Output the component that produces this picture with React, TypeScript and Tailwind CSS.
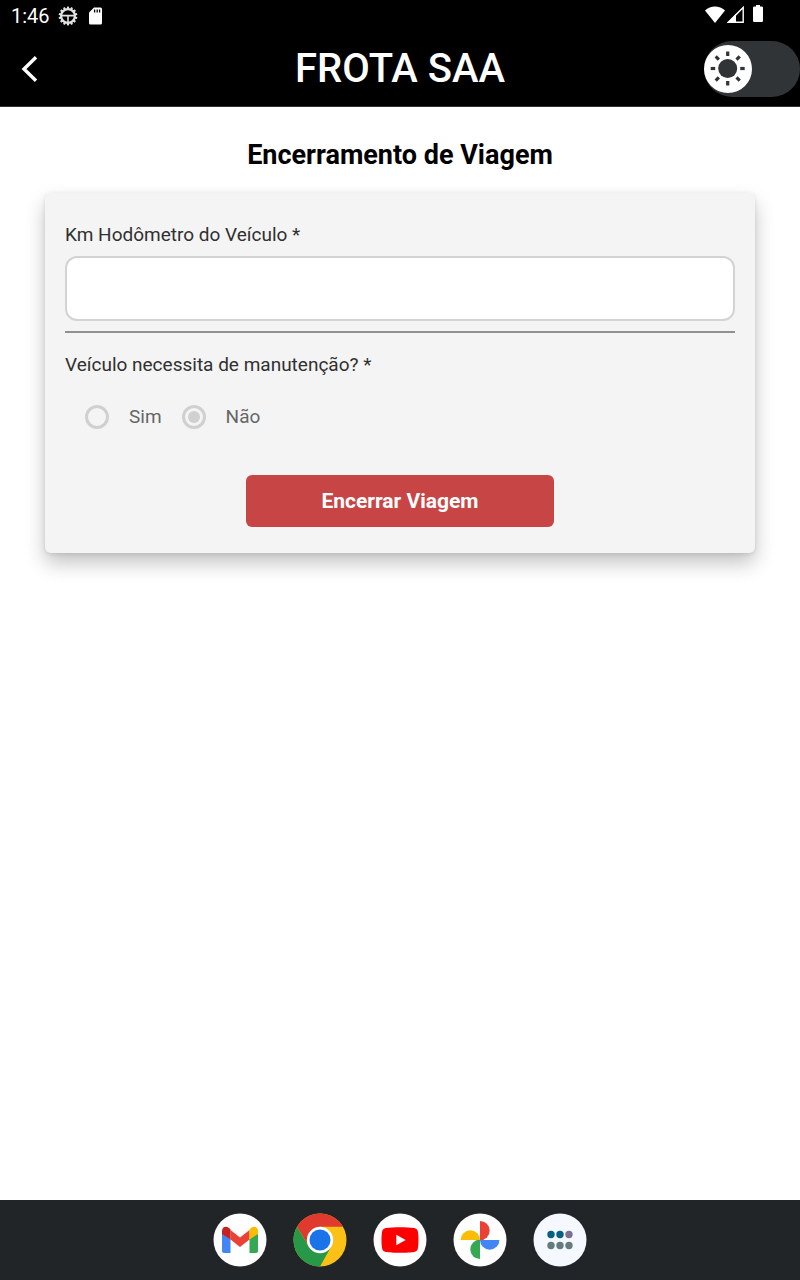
import { useState } from "react";

const teeth = Array.from({ length: 14 }, (_, i) => (i * 360) / 14);
const rays = [0, 45, 90, 135, 180, 225, 270, 315];

function StatusBar() {
  return (
    <div className="flex h-8 items-center justify-between pl-[11px] pr-9 text-white">
      <div className="flex items-center gap-2">
        <span className="text-[20px] leading-8">1:46</span>
        <svg width="20" height="20" viewBox="0 0 20 20" fill="none" stroke="#e2e2e2">
          <circle cx="10" cy="10" r="6.9" strokeWidth="2.2" />
          {teeth.map((angle) => (
            <path key={angle} d="M10 3V.6" strokeWidth="2.1" transform={`rotate(${angle} 10 10)`} />
          ))}
          <path d="M3.5 9.6h13M10 10v6.5" strokeWidth="1.6" />
        </svg>
        <svg className="ml-0.5" width="15" height="18" viewBox="0 0 15 18">
          <path d="M6 .5h6.500Q14 .5 14 2v14q0 1.500-1.500 1.500h-10Q1 17.500 1 16V5.500Z" fill="#fff" />
          <path d="M6.600 2.500v3M9.200 2.500v3M11.600 2.500v3" stroke="#000" strokeWidth="1.300" />
        </svg>
      </div>
      <div className="flex items-center gap-0.5 pb-1">
        <svg width="20" height="17" viewBox="0 0 20 17" fill="#fff">
          <path d="M0 4.500C5.500-.8 14.500-.8 20 4.500L10 17Z" />
        </svg>
        <svg width="17" height="17" viewBox="0 0 17 17">
          <path d="M16.200 1.400v14.800H1.400Z" fill="none" stroke="#fff" strokeWidth="1.400" />
          <path d="M9 8v9H.5Z" fill="#fff" />
        </svg>
        <svg className="ml-1.5" width="12" height="18" viewBox="0 0 12 18" fill="#fff">
          <path d="M4 0h4v1.500h1.800Q11 1.500 11 2.700v13Q11 17 9.800 17H2.200Q1 17 1 15.700v-13Q1 1.500 2.200 1.500H4Z" />
        </svg>
      </div>
    </div>
  );
}

function ThemeSwitch() {
  const [dark, setDark] = useState(false);

  return (
    <button
      type="button"
      role="switch"
      aria-checked={dark}
      aria-label="Tema escuro"
      onClick={() => setDark(!dark)}
      className={`flex h-14 w-24 items-center rounded-full bg-[#303437] ${dark ? "justify-end" : "justify-start"}`}
    >
      <svg width="48" height="48" viewBox="0 0 48 48">
        <circle cx="24" cy="24" r="24" fill="#fff" />
        <circle cx="23.700" cy="23.500" r="9.500" fill="#303437" />
        {rays.map((angle) => (
          <path
            key={angle}
            d="M23.700 6.500v4.500"
            stroke="#303437"
            strokeWidth="3.200"
            transform={`rotate(${angle} 23.700 23.500)`}
          />
        ))}
      </svg>
    </button>
  );
}

function Header() {
  return (
    <header className="border-b border-[#333] bg-black text-white">
      <StatusBar />
      <div className="grid h-[74px] grid-cols-[1fr_auto_1fr] items-center">
        <a href="#voltar" aria-label="Voltar" className="justify-self-start pl-5">
          <svg width="20" height="28" viewBox="0 0 20 28" fill="none" stroke="#fff" strokeWidth="3.400">
            <path d="M16 2.200 4 14l12 11.800" />
          </svg>
        </a>
        <h1 className="text-[40px] leading-none font-medium">FROTA SAA</h1>
        <div className="flex justify-end">
          <ThemeSwitch />
        </div>
      </div>
    </header>
  );
}

function RadioOption({ label, defaultChecked }: { label: string; defaultChecked?: boolean }) {
  return (
    <label className="flex items-center gap-5 text-[#666]">
      <input
        type="radio"
        name="manutencao"
        defaultChecked={defaultChecked}
        className="size-6 appearance-none rounded-full border-3 border-[#d0d0d0] bg-clip-content p-[3px] checked:bg-[#d0d0d0]"
      />
      {label}
    </label>
  );
}

function TripForm() {
  return (
    <form
      onSubmit={(e) => e.preventDefault()}
      className="mx-[45px] mt-[22px] rounded-md bg-[#f4f4f4] px-5 pt-[30px] pb-[26px] text-[19px] leading-6 text-[#303030] shadow-[0_10px_20px_rgba(0,0,0,0.24),0_1px_4px_rgba(0,0,0,0.1)]"
    >
      <div className="border-b-2 border-[#909090] pb-[10px]">
        <label htmlFor="hodometro" className="block">
          Km Hodômetro do Veículo *
        </label>
        <input
          id="hodometro"
          type="text"
          inputMode="numeric"
          className="mt-[9px] block h-[65px] w-full rounded-xl border-2 border-[#d3d3d3] bg-white px-4 outline-none"
        />
      </div>

      <fieldset className="mt-5">
        <legend>Veículo necessita de manutenção? *</legend>
        <div className="mt-7 flex gap-5 px-5">
          <RadioOption label="Sim" />
          <RadioOption label="Não" defaultChecked />
        </div>
      </fieldset>

      <button
        type="submit"
        className="mx-auto mt-[46px] block h-[52px] w-[46%] rounded-md bg-[#c84545] text-[21px] font-bold text-white"
      >
        Encerrar Viagem
      </button>
    </form>
  );
}

function GmailIcon() {
  return (
    <svg width="54" height="54" viewBox="0 0 54 54">
      <circle cx="27" cy="27" r="26.500" fill="#fff" />
      <path d="M9 20v18q0 2 2 2h6.500V26Z" fill="#4285f4" />
      <path d="M45 20v18q0 2-2 2h-6.500V26Z" fill="#34a853" />
      <path d="m17.500 17 9.500 7.500 9.500-7.500v9.500L27 34l-9.500-7.500Z" fill="#ea4335" />
      <path d="M9 21v-3c0-4 4-5.500 7-3l1.500 1.500v10Z" fill="#c5221f" />
      <path d="M45 21v-3c0-4-4-5.500-7-3l-1.500 1.500v10Z" fill="#fbbc04" />
    </svg>
  );
}

function ChromeIcon() {
  return (
    <svg width="54" height="54" viewBox="0 0 54 54">
      <circle cx="27" cy="27" r="26.500" fill="#fbc116" />
      <path d="M4.050 13.750A26.500 26.500 0 0 1 49.950 13.750H27L15.740 33.500Z" fill="#df3a2d" />
      <path d="M4.050 13.750A26.500 26.500 0 0 0 27 53.500L38.260 33.500H15.740Z" fill="#279847" />
      <circle cx="27" cy="27" r="13.200" fill="#fff" />
      <circle cx="27" cy="27" r="10.500" fill="#1a73e8" />
    </svg>
  );
}

function YoutubeIcon() {
  return (
    <svg width="54" height="54" viewBox="0 0 54 54">
      <circle cx="27" cy="27" r="26.500" fill="#fff" />
      <path
        d="M27 14.200c5 0 11 .2 14 .8q3.500.7 4 4c.7 5 .7 11 0 16q-.5 3.300-4 4c-5 1-23 1-28 0q-3.500-.7-4-4c-.7-5-.7-11 0-16q.5-3.300 4-4c3-.6 9-.8 14-.8Z"
        fill="#f00"
      />
      <path d="M23.300 21.700v10.600l9.400-5.300Z" fill="#fff" />
    </svg>
  );
}

function PhotosIcon() {
  return (
    <svg width="54" height="54" viewBox="0 0 54 54">
      <circle cx="27" cy="27" r="26.500" fill="#fff" />
      <path d="M27 8a9.700 9.700 0 0 1 0 19.400Z" fill="#ea4335" />
      <path d="M46.400 27a9.700 9.700 0 0 1-19.400 0Z" fill="#4285f4" />
      <path d="M27 46a9.700 9.700 0 0 1 0-19.400Z" fill="#34a853" />
      <path d="M7.600 27a9.700 9.700 0 0 1 19.400 0Z" fill="#fbbc04" />
    </svg>
  );
}

function AppsIcon() {
  return (
    <svg width="54" height="54" viewBox="0 0 54 54">
      <circle cx="27" cy="27" r="26.500" fill="#f5f9ff" />
      <circle cx="18" cy="21.500" r="3.700" fill="#056182" />
      <circle cx="27" cy="21.500" r="3.700" fill="#056182" />
      <circle cx="36" cy="21.500" r="3.700" fill="#7a7290" />
      <circle cx="18" cy="32.500" r="3.700" fill="#647c80" />
      <circle cx="27" cy="32.500" r="3.700" fill="#647c80" />
      <circle cx="36" cy="32.500" r="3.700" fill="#647c80" />
    </svg>
  );
}

const apps = [
  { name: "Gmail", Icon: GmailIcon },
  { name: "Chrome", Icon: ChromeIcon },
  { name: "YouTube", Icon: YoutubeIcon },
  { name: "Fotos", Icon: PhotosIcon },
  { name: "Aplicativos", Icon: AppsIcon },
];

function Dock() {
  return (
    <nav className="flex h-20 items-center justify-center gap-[26px] bg-[#212527]">
      {apps.map(({ name, Icon }) => (
        <button key={name} type="button" aria-label={name}>
          <Icon />
        </button>
      ))}
    </nav>
  );
}

export default function App() {
  return (
    <div className="flex min-h-screen flex-col bg-white font-[Roboto,sans-serif]">
      <Header />
      <main className="flex-1 pt-8">
        <h2 className="text-center text-[27px] leading-8 font-bold text-black">
          Encerramento de Viagem
        </h2>
        <TripForm />
      </main>
      <Dock />
    </div>
  );
}
